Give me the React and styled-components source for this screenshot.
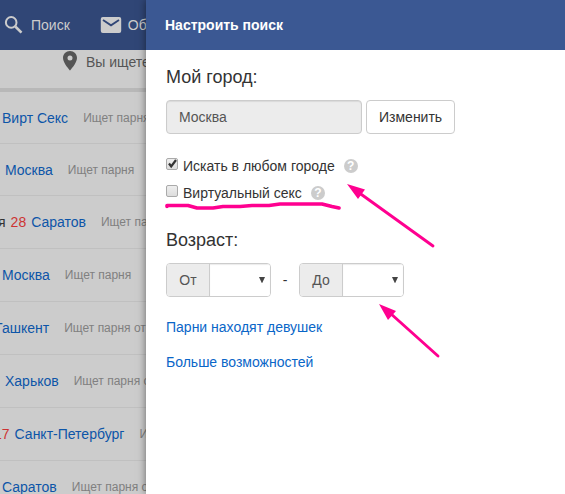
import React from "react";
import styled, { createGlobalStyle } from "styled-components";

const GlobalStyle = createGlobalStyle`
  *, *::before, *::after { box-sizing: border-box; }
  body {
    margin: 0;
    background: #cccccc;
    color: #333333;
    font: 14px/20px "Liberation Sans", Arial, sans-serif;
    overflow: hidden;
  }
`;

const Shell = styled.div`
  position: relative;
  height: 100vh;
  overflow: hidden;
`;

const TopBar = styled.nav`
  display: flex;
  align-items: center;
  gap: 30px;
  height: 50px;
  padding-left: 3px;
  background: #304676;
`;

const NavItem = styled.a`
  display: flex;
  align-items: center;
  gap: 6px;
  color: #cccccc;
  text-decoration: none;
  white-space: nowrap;
`;

const Status = styled.div`
  display: flex;
  align-items: center;
  gap: 5px;
  height: 42px;
  padding: 0 0 16px 59px;
  border-bottom: 4px solid #b8b8b8;
  color: #555555;
  white-space: nowrap;
`;

const StatusText = styled.span`
  padding-top: 2px;
`;

const People = styled.ul`
  margin: 0;
  padding: 0;
  list-style: none;
`;

const Person = styled.li`
  display: flex;
  align-items: center;
  height: 53px;
  border-bottom: 1px solid #c0c0c0;
  white-space: nowrap;

  &:nth-child(-n + 2) { height: 52px; }
`;

const Who = styled.span`
  display: flex;
  gap: 5px;
  margin-left: ${(p) => p.$start}px;
`;

const Age = styled.span`
  color: #cc3333;
`;

const City = styled.a`
  color: #0d55a8;
  text-decoration: none;
`;

const Seeks = styled.span`
  margin-left: 15px;
  color: #808080;
  font-size: 12px;
`;

const Drawer = styled.aside`
  position: absolute;
  inset: 0 0 0 146px;
  background: #ffffff;
  box-shadow: 0 0 8px rgba(0, 0, 0, 0.5);
`;

const DrawerHeader = styled.header`
  display: flex;
  align-items: center;
  height: 50px;
  padding: 0 19px;
  background: #3b5893;
  color: #ffffff;
  font-weight: bold;
`;

const Form = styled.form`
  display: flex;
  flex-direction: column;
  align-items: flex-start;
  padding: 16px 20px;
`;

const Heading = styled.h2`
  margin: 0 0 12px;
  font-size: 18px;
  font-weight: normal;
  line-height: 22px;
`;

const CityRow = styled.div`
  display: flex;
  gap: 4px;
  margin-bottom: 22px;
`;

const CityInput = styled.input`
  width: 196px;
  height: 34px;
  padding: 0 12px;
  border: 1px solid #cccccc;
  border-radius: 4px;
  background: #ececec;
  box-shadow: inset 0 1px 1px rgba(0, 0, 0, 0.08);
  color: #555555;
  font: inherit;
`;

const ChangeButton = styled.button`
  height: 34px;
  padding: 0 12px;
  border: 1px solid #cccccc;
  border-radius: 4px;
  background: #ffffff;
  color: #333333;
  font: inherit;
`;

const OptionRow = styled.div`
  display: flex;
  align-items: center;
  gap: 9px;
  margin-bottom: 7px;
`;

const OptionLabel = styled.label`
  position: relative;
  display: flex;
  align-items: center;
  gap: 5px;
`;

const Checkbox = styled.input`
  appearance: none;
  width: 12px;
  height: 12px;
  margin: 0 0 4px;
  border: 1px solid #aaaaaa;
  border-radius: 2px;
  background: linear-gradient(#eeeeee, #dddddd);

  & + svg { display: none; }
  &:checked + svg { display: block; }
`;

const Tick = styled.svg`
  position: absolute;
  left: 1px;
  top: 2px;
  pointer-events: none;
`;

const Help = styled.button`
  display: flex;
  align-items: center;
  justify-content: center;
  width: 14px;
  height: 14px;
  padding: 0;
  border: 0;
  border-radius: 50%;
  background: #cccccc;
  color: #ffffff;
  font: bold 12px/14px "Liberation Sans", Arial, sans-serif;
`;

const AgeTitle = styled(Heading)`
  margin-top: 19px;
`;

const AgeRow = styled.div`
  display: flex;
  align-items: center;
  margin-bottom: 20px;
`;

const Dash = styled.span`
  width: 28px;
  text-align: center;
`;

const AgeGroup = styled.div`
  position: relative;
  display: flex;
  width: 105px;
  height: 34px;
  border: 1px solid #cccccc;
  border-radius: 4px;
  overflow: hidden;
`;

const AgeLabel = styled.label`
  display: flex;
  align-items: center;
  justify-content: center;
  width: 43px;
  border-right: 1px solid #cccccc;
  background: #ececec;
  color: #555555;
`;

const AgeSelect = styled.select`
  appearance: none;
  flex: 1;
  min-width: 0;
  border: 0;
  background: #ffffff;
  box-shadow: inset 0 1px 1px rgba(0, 0, 0, 0.08);
  color: #555555;
  font: inherit;
`;

const Caret = styled.svg`
  position: absolute;
  right: 5px;
  top: 13px;
  pointer-events: none;
`;

const FormLink = styled.a`
  margin-bottom: 15px;
  color: #0a66c8;
  text-decoration: none;
`;

const Marks = styled.svg`
  position: absolute;
  left: 14px;
  top: 170px;
  pointer-events: none;
`;

const people = [
  { start: 2, city: "Вирт Секс", seeks: "Ищет парня" },
  { start: 5, city: "Москва", seeks: "Ищет парня" },
  { start: -2, name: "я", age: "28", city: "Саратов", seeks: "Ищет парня" },
  { start: 2, city: "Москва", seeks: "Ищет парня" },
  { start: -6, city: "Ташкент", seeks: "Ищет парня от" },
  { start: 5, city: "Харьков", seeks: "Ищет парня от" },
  { start: -6, age: "17", city: "Санкт-Петербург", seeks: "Ищет парня" },
  { start: 2, city: "Саратов", seeks: "Ищет парня от" },
];

const ages = Array.from({ length: 63 }, (_, i) => i + 18);

function Option({ id, label, defaultChecked }) {
  return (
    <OptionRow>
      <OptionLabel htmlFor={id}>
        <Checkbox id={id} type="checkbox" defaultChecked={defaultChecked} />
        <Tick width="11" height="11" viewBox="0 0 11 11" aria-hidden="true">
          <path d="M2 5.5 4.2 8.5 9 2" fill="none" stroke="#333" strokeWidth="2.2" />
        </Tick>
        {label}
      </OptionLabel>
      <Help type="button" aria-label={`Справка: ${label}`}>?</Help>
    </OptionRow>
  );
}

function AgeField({ id, label }) {
  return (
    <AgeGroup>
      <AgeLabel htmlFor={id}>{label}</AgeLabel>
      <AgeSelect id={id} defaultValue="">
        <option value="" />
        {ages.map((age) => (
          <option key={age}>{age}</option>
        ))}
      </AgeSelect>
      <Caret width="6" height="6" viewBox="0 0 6 6" aria-hidden="true">
        <path d="M0 0H6L3.2 6H2.8Z" fill="#444" />
      </Caret>
    </AgeGroup>
  );
}

export default function App() {
  return (
    <Shell>
      <GlobalStyle />
      <TopBar>
        <NavItem href="#search">
          <svg width="22" height="22" viewBox="0 0 22 22" aria-hidden="true">
            <circle cx="8.2" cy="8.4" r="5.3" fill="none" stroke="#ccc" strokeWidth="2" />
            <path d="M12.3 12.5 18.5 18.7" stroke="#ccc" strokeWidth="2.6" />
          </svg>
          Поиск
        </NavItem>
        <NavItem href="#messages">
          <svg width="22" height="18" viewBox="0 0 22 18" aria-hidden="true">
            <rect x="0.8" y="1" width="20.4" height="16" rx="2" fill="#ccc" />
            <path d="M3 4 11 9.3 19 4" fill="none" stroke="#304676" strokeWidth="1.8" />
          </svg>
          Общение
        </NavItem>
      </TopBar>
      <Status>
        <svg width="22" height="22" viewBox="0 0 22 22" aria-hidden="true">
          <path
            d="M11 1C7 1 4 4 4 8C4 13 11 20.5 11 20.5S18 13 18 8C18 4 15 1 11 1ZM11 5.5A2.5 2.5 0 1 1 11 10.5A2.5 2.5 0 1 1 11 5.5Z"
            fill="#555"
          />
        </svg>
        <StatusText>Вы ищете</StatusText>
      </Status>
      <People>
        {people.map((person, i) => (
          <Person key={i}>
            <Who $start={person.start}>
              {person.name}
              {person.age && <Age>{person.age}</Age>}
              <City href="#profile">{person.city}</City>
            </Who>
            <Seeks>{person.seeks}</Seeks>
          </Person>
        ))}
      </People>
      <Drawer>
        <DrawerHeader>Настроить поиск</DrawerHeader>
        <Form>
          <Heading as="label" htmlFor="city">Мой город:</Heading>
          <CityRow>
            <CityInput id="city" readOnly value="Москва" />
            <ChangeButton type="button">Изменить</ChangeButton>
          </CityRow>
          <Option id="any-city" label="Искать в любом городе" defaultChecked />
          <Option id="virtual" label="Виртуальный секс" />
          <AgeTitle>Возраст:</AgeTitle>
          <AgeRow>
            <AgeField id="age-from" label="От" />
            <Dash>-</Dash>
            <AgeField id="age-to" label="До" />
          </AgeRow>
          <FormLink href="#who">Парни находят девушек</FormLink>
          <FormLink href="#more">Больше возможностей</FormLink>
        </Form>
        <Marks width="290" height="200" viewBox="160 170 290 200" aria-hidden="true">
          <g fill="none" stroke="#ff0090" strokeLinecap="round" strokeLinejoin="round">
            <path strokeWidth="3.6" d="M167 206.500V205.500H188L197 208H213L223 206.500H240L252 205.500H269L280 204H322L332 206.500L339 208" />
            <path strokeWidth="2.9" d="M358 192 433 246" />
            <path strokeWidth="2.9" d="M390 313 438 356" />
          </g>
          <path d="M347 184 365 189.500 358 199ZM379 304 396 311 388 320Z" fill="#ff0090" />
        </Marks>
      </Drawer>
    </Shell>
  );
}
